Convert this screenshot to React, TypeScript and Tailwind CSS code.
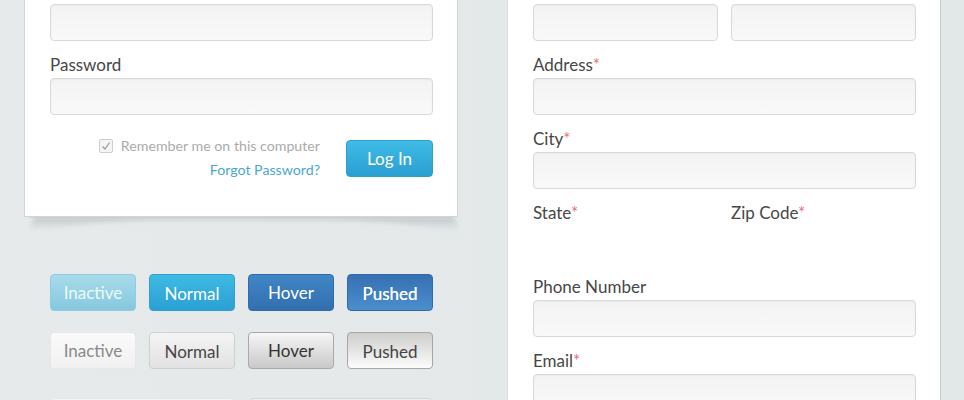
import React from 'react';

function Input({ className = '' }: { className?: string }) {
  return (
    <div
      className={`h-[37px] rounded-[4px] border border-[#d9d9d9] bg-gradient-to-b from-[#f3f3f3] to-[#f9f9f9] shadow-[inset_0_1px_2px_rgba(0,0,0,0.04)] ${className}`}
    />
  );
}

function Label({ text, required }: { text: string; required?: boolean }) {
  return (
    <div className="pt-[14px] pb-[3px] text-[17px] leading-[20px] text-[#474747]">
      {text}
      {required && <span className="text-[#e4707a]">*</span>}
    </div>
  );
}

function Field({ label, required }: { label: string; required?: boolean }) {
  return (
    <div>
      <Label text={label} required={required} />
      <Input />
    </div>
  );
}

const blueButtons = [
  { label: 'Inactive', cls: 'border-[#8fcde2] from-[#a8dbea] to-[#86c8de] text-[#eef8fb]' },
  { label: 'Normal', cls: 'border-[#2d9fd2] from-[#3fbbe4] to-[#2b9fd3] text-white pt-[2px]' },
  { label: 'Hover', cls: 'border-[#316aa9] from-[#4086c5] to-[#336faf] text-white' },
  {
    label: 'Pushed',
    cls: 'border-[#3369a9] from-[#3670b2] to-[#4a8fce] text-white pt-[2px] [text-shadow:0_0_0.6px_#ffffff]',
  },
];

const grayButtons = [
  { label: 'Inactive', cls: 'border-[#e7e7e7] from-[#fafafa] to-[#f1f1f1] text-[#8a8a8a]' },
  { label: 'Normal', cls: 'border-[#d0d0d0] from-[#f4f4f4] to-[#e2e2e2] text-[#454545] pt-[2px]' },
  { label: 'Hover', cls: 'border-[#a9a9a9] from-[#f6f6f6] to-[#c9c9c9] text-[#333333]' },
  { label: 'Pushed', cls: 'border-[#a6a6a6] from-[#cececc] to-[#fcfcfc] text-[#444444] pt-[2px]' },
];

function Btn({ label, cls }: { label: string; cls: string }) {
  return (
    <div
      className={`flex h-[37px] items-center justify-center rounded-[4px] border bg-gradient-to-b text-[17px] leading-none ${cls}`}
    >
      {label}
    </div>
  );
}

function CardShadow() {
  return (
    <svg className="absolute -left-[6px] top-full" width="440" height="22" viewBox="0 0 440 22">
      <defs>
        <linearGradient id="sh" x1="0" y1="0" x2="0" y2="1">
          <stop offset="0" stopColor="#b4babb" stopOpacity="0.8" />
          <stop offset="1" stopColor="#c9cfd0" stopOpacity="0" />
        </linearGradient>
        <filter id="bl" x="-5%" y="-50%" width="110%" height="200%">
          <feGaussianBlur stdDeviation="2.2" />
        </filter>
      </defs>
      <path d="M10 0 H430 L436 15 Q380 4 300 3 L140 3 Q60 4 4 15 Z" fill="url(#sh)" filter="url(#bl)" />
    </svg>
  );
}

export default function App() {
  return (
    <div className="flex h-[400px] w-[964px] overflow-hidden bg-gradient-to-r from-[#e6eaeb] to-[#e2e7e8] font-['Lato',sans-serif]">
      {/* Left column: login card + button states */}
      <div className="ml-[24px] flex w-[434px] shrink-0 flex-col">
        <div className="border border-t-0 border-[#d2d6d6] bg-white pl-[25px] pr-[24px] pt-[4px] pb-[36px]">
          <Input />
          <Field label="Password" />
          <div className="mt-[25px] flex items-start justify-end gap-[26px]">
            <div className="-mt-[4px] flex flex-col items-end gap-[4px] text-[14.2px] leading-[20px]">
              <div className="flex items-center gap-[8px] text-[#ababab]">
                <span className="flex h-[14px] w-[14px] items-center justify-center rounded-[2px] border border-[#cdcdcd] bg-[#f5f5f5]">
                  <svg width="10" height="10" viewBox="0 0 10 10">
                    <path d="M1.5 5.5 L4 8 L8.5 1.5" fill="none" stroke="#9a9a9a" strokeWidth="1.2" />
                  </svg>
                </span>
                <span>Remember me on this computer</span>
              </div>
              <span className="text-[#4ba6d3]">Forgot Password?</span>
            </div>
            <div className="flex h-[37px] w-[87px] items-center justify-center rounded-[4px] border border-[#2d9fd2] bg-gradient-to-b from-[#3fbbe4] to-[#2b9fd3] text-[17px] leading-none text-white">
              Log In
            </div>
          </div>
        </div>
        <div className="relative mx-[5px] h-[4px] border border-t-0 border-[#d5d9d9] bg-white">
          <CardShadow />
        </div>

        <div className="ml-[26px] mt-[56px] w-[383px]">
          <div className="grid grid-cols-4 gap-[13px]">
            {blueButtons.map((b) => (
              <Btn key={b.label} {...b} />
            ))}
          </div>
          <div className="mt-[21px] grid grid-cols-4 gap-[13px]">
            {grayButtons.map((b) => (
              <Btn key={b.label} {...b} />
            ))}
          </div>
          <div className="mt-[29px] grid grid-cols-2 gap-[15px]">
            <div className="h-[37px] rounded-[4px] border border-[#e6e6e6] bg-[#f3f3f3]" />
            <div className="h-[37px] rounded-[4px] border border-[#d6d6d4] bg-[#eeeeec]" />
          </div>
        </div>
      </div>

      {/* Right column: address form */}
      <div className="ml-[49px] h-full w-[434px] shrink-0 border-x border-l-[#d9dddd] border-r-[#c6cbcb] bg-white pl-[25px] pr-[24px] pt-[4px]">
        <div className="grid grid-cols-2 gap-[13px]">
          <Input />
          <Input />
        </div>
        <Field label="Address" required />
        <Field label="City" required />
        <div className="grid grid-cols-2 gap-[13px]">
          <Label text="State" required />
          <Label text="Zip Code" required />
        </div>
        <div className="h-[37px]" />
        <Field label="Phone Number" />
        <Field label="Email" required />
      </div>
    </div>
  );
}
